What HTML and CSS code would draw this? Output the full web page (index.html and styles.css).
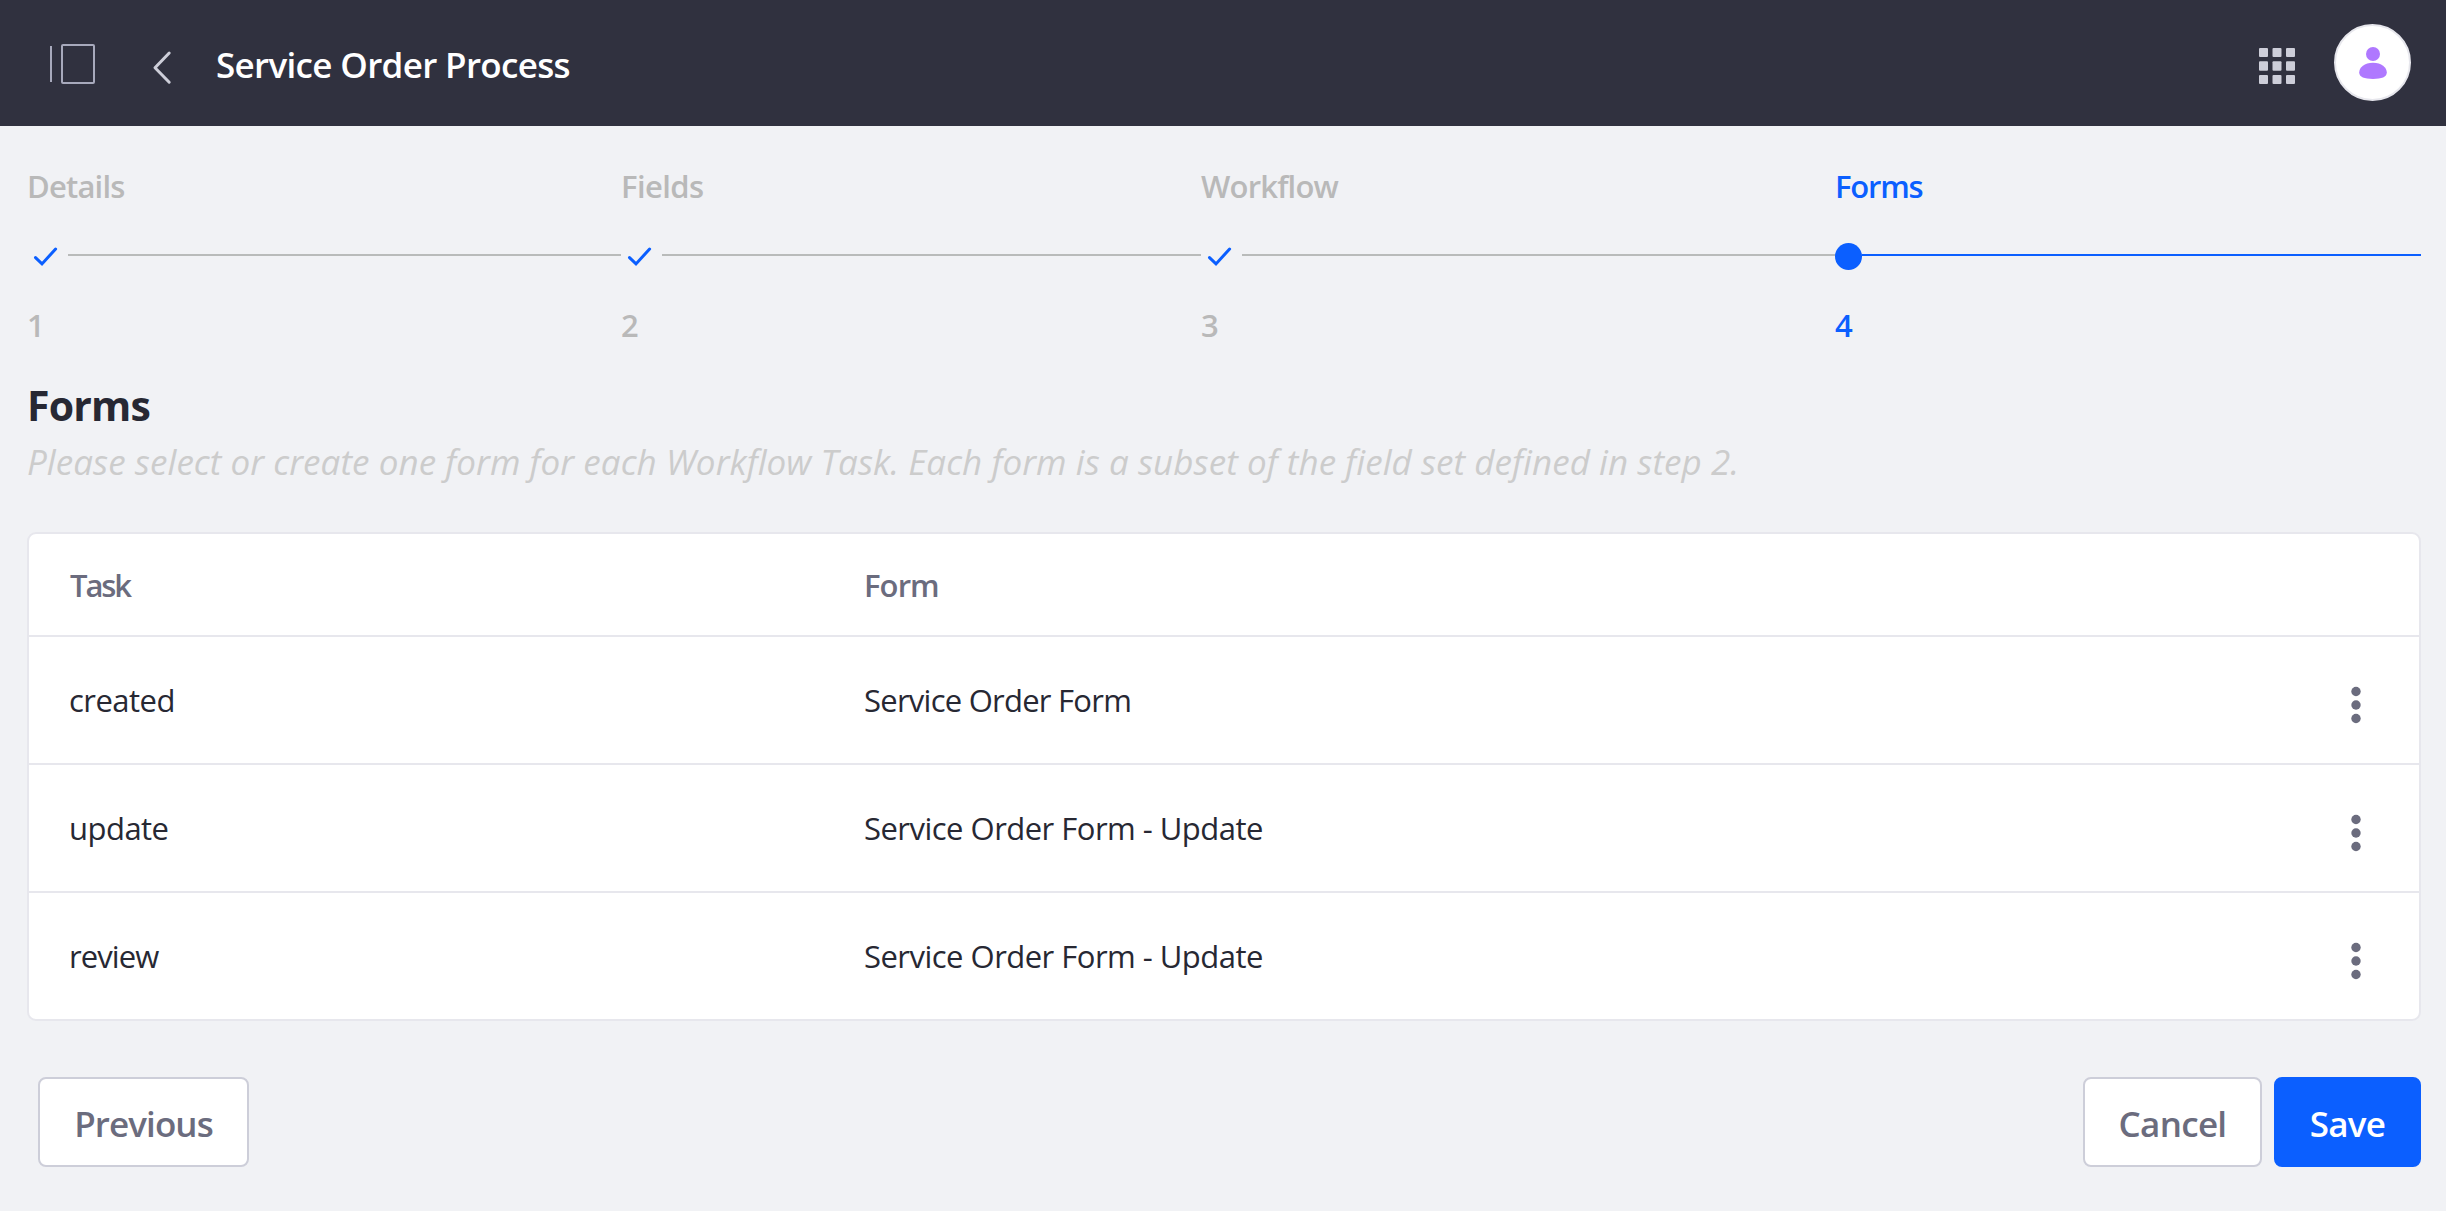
FILE: index.html
```html
<!DOCTYPE html>
<html lang="en">
<head>
<meta charset="utf-8">
<title>Service Order Process</title>
<link rel="stylesheet" href="styles.css">
</head>
<body>
<header class="topbar">
  <svg class="icon-panel" width="48" height="42" viewBox="0 0 48 42" fill="none" stroke="#a7a9bc" stroke-width="2"><path d="M3 3v36"/><rect x="14" y="2" width="32" height="38" rx="1"/></svg>
  <svg class="icon-back" width="20" height="36" viewBox="0 0 20 36" fill="none" stroke="#cdced9" stroke-width="3" stroke-linecap="round" stroke-linejoin="round"><path d="M17.2 3 3 17.8 17.2 32.2"/></svg>
  <h1 class="title">Service Order Process</h1>
  <svg class="icon-apps" width="36" height="36" viewBox="0 0 36 36" fill="#cdced9"><rect width="9" height="9" rx="1"/><rect x="13.5" width="9" height="9" rx="1"/><rect x="27" width="9" height="9" rx="1"/><rect y="13.3" width="9" height="9.4" rx="1"/><rect x="13.5" y="13.3" width="9" height="9.4" rx="1"/><rect x="27" y="13.3" width="9" height="9.4" rx="1"/><rect y="27" width="9" height="9" rx="1"/><rect x="13.5" y="27" width="9" height="9" rx="1"/><rect x="27" y="27" width="9" height="9" rx="1"/></svg>
  <div class="avatar">
    <svg width="28" height="32" viewBox="0 0 28 32" fill="#af78ff"><circle cx="14" cy="7" r="7"/><path d="M14 15.8c8.500 0 13.800 4.600 13.800 9.800 0 4.600-5.200 6.300-13.800 6.300S.2 30.200.2 25.600c0-5.200 5.300-9.800 13.800-9.800z"/></svg>
  </div>
</header>
<main class="page">
  <ol class="steps">
    <li class="step">
      <span class="step-label label-details">Details</span>
      <span class="step-track"><svg class="check" width="27" height="27" viewBox="0 0 27 27"><path d="M2.500 14.600 9 20.900 22.600 6"/></svg><i class="line"></i></span>
      <span class="step-label">1</span>
    </li>
    <li class="step">
      <span class="step-label label-fields">Fields</span>
      <span class="step-track"><svg class="check" width="27" height="27" viewBox="0 0 27 27"><path d="M2.500 14.600 9 20.900 22.600 6"/></svg><i class="line"></i></span>
      <span class="step-label">2</span>
    </li>
    <li class="step">
      <span class="step-label">Workflow</span>
      <span class="step-track"><svg class="check" width="27" height="27" viewBox="0 0 27 27"><path d="M2.500 14.600 9 20.900 22.600 6"/></svg><i class="line"></i></span>
      <span class="step-label">3</span>
    </li>
    <li class="step active">
      <span class="step-label label-forms">Forms</span>
      <span class="step-track"><i class="dot"></i><i class="line"></i></span>
      <span class="step-label">4</span>
    </li>
  </ol>
  <h2 class="heading">Forms</h2>
  <p class="hint">Please select or create one form for each Workflow Task. Each form is a subset of the field set defined in step 2.</p>
  <section class="card">
    <div class="row head"><span class="th-task">Task</span><span>Form</span></div>
    <div class="row"><span>created</span><span class="short">Service Order Form</span><svg class="kebab" width="10" height="38" viewBox="0 0 10 38"><circle cx="5" cy="5.500" r="4.700"/><circle cx="5" cy="19" r="4.700"/><circle cx="5" cy="32.500" r="4.700"/></svg></div>
    <div class="row"><span>update</span><span>Service Order Form - Update</span><svg class="kebab" width="10" height="38" viewBox="0 0 10 38"><circle cx="5" cy="5.500" r="4.700"/><circle cx="5" cy="19" r="4.700"/><circle cx="5" cy="32.500" r="4.700"/></svg></div>
    <div class="row"><span class="review">review</span><span>Service Order Form - Update</span><svg class="kebab" width="10" height="38" viewBox="0 0 10 38"><circle cx="5" cy="5.500" r="4.700"/><circle cx="5" cy="19" r="4.700"/><circle cx="5" cy="32.500" r="4.700"/></svg></div>
  </section>
  <footer class="actions">
    <button class="btn previous">Previous</button>
    <button class="btn cancel">Cancel</button>
    <button class="btn save">Save</button>
  </footer>
</main>
</body>
</html>
```
FILE: styles.css
```css
* { box-sizing: border-box; }
body {
  margin: 0;
  background: #f1f2f5;
  color: #272833;
  font: 400 31px/40px "Open Sans", "Noto Sans", sans-serif;
}
svg { display: block; flex: none; }

.topbar {
  display: flex;
  align-items: center;
  height: 126px;
  padding: 0 35px 0 48px;
  background: #30313f;
}
.icon-panel { margin-top: 2px; }
.icon-back { margin: 10px 0 0 56px; }
.title {
  margin: 3px auto 0 44px;
  color: #fff;
  font-size: 35px;
  font-weight: 550;
  letter-spacing: -.67px;
}
.icon-apps { margin: 6px 39px 0 0; }
.avatar {
  display: flex;
  align-items: center;
  justify-content: center;
  width: 77px;
  height: 77px;
  margin-bottom: 1px;
  border: 2px solid #e7e7ed;
  border-radius: 50%;
  background: #fff;
}

.page { padding: 40px 25px 0 27px; }
.steps {
  display: grid;
  grid-template-columns: 594px 580px 634px 586px;
  margin: 0;
  padding: 0;
  list-style: none;
}
.step {
  display: flex;
  flex-direction: column;
  color: #b9b9b9;
  font-weight: 550;
}
.step-label { letter-spacing: -.8px; }
.label-fields { letter-spacing: -.6px; }
.label-forms { letter-spacing: -1.2px; }
.step-track { display: flex; height: 27px; margin: 37px 0 35px; }
.check {
  margin: 0 8px 0 6px;
  fill: none;
  stroke: #0b5fff;
  stroke-width: 3;
  stroke-linecap: round;
}
.line { flex: 1; height: 2px; margin-top: 11px; background: #b9bbba; }
.dot { width: 27px; height: 27px; border-radius: 50%; background: #0b5fff; }
.active { color: #0b5fff; }
.active .line { background: #0b5fff; }

.heading {
  margin: 32px 0 0;
  font-size: 41px;
  line-height: 56px;
  font-weight: 700;
  letter-spacing: -.8px;
}
.hint {
  margin: 5px 0 46px;
  color: #ccc;
  font-size: 35px;
  line-height: 48px;
  font-style: italic;
  letter-spacing: .055px;
}

.card {
  overflow: hidden;
  border: 2px solid #e7e7ed;
  border-radius: 9px;
  background: #fff;
}
.row {
  display: grid;
  grid-template-columns: 795px 1fr 10px;
  align-items: center;
  height: 128px;
  padding: 0 58px 0 40px;
  border-bottom: 2px solid #e7e7ed;
  letter-spacing: -.52px;
}
.row:last-child { height: 126px; border-bottom: 0; }
.head {
  height: 103px;
  color: #6b6c7e;
  font-weight: 550;
  letter-spacing: -.9px;
}
.th-task { padding-left: 1px; letter-spacing: -2.1px; }
.short { letter-spacing: -.75px; }
.review { letter-spacing: -.9px; }
.kebab { margin-top: 10px; fill: #6b6c7e; }

.actions { display: flex; gap: 12px; margin-top: 56px; }
.btn {
  height: 90px;
  padding: 3px 0 0;
  border: 2px solid #cdced9;
  border-radius: 8px;
  background: #fff;
  color: #6b6c7e;
  font: 550 35px/40px "Open Sans", "Noto Sans", sans-serif;
  letter-spacing: -.7px;
}
.previous { width: 211px; margin: 0 auto 0 11px; letter-spacing: -.9px; }
.cancel { width: 179px; }
.save { width: 147px; border-color: #0b5fff; background: #0b5fff; color: #fff; }
```
